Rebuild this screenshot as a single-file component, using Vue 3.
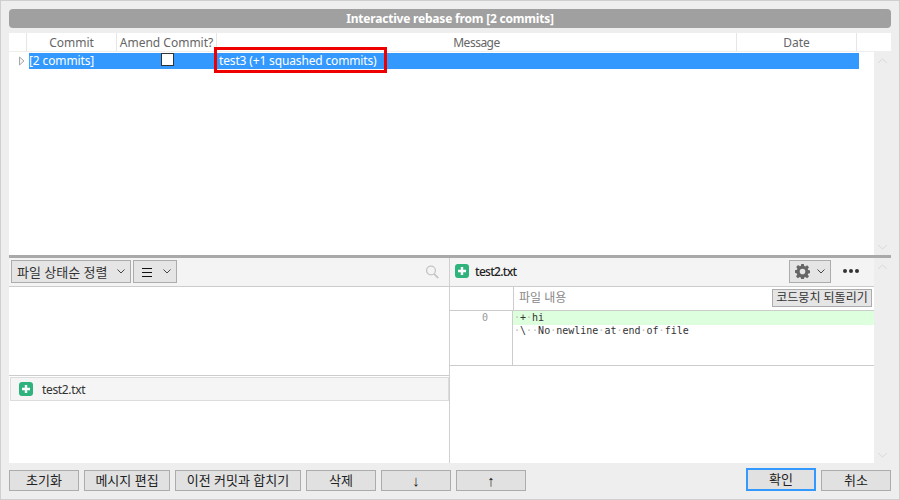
<script setup>
const columns = [
  { label: 'Commit', cls: 'c-commit' },
  { label: 'Amend Commit?', cls: 'c-amend' },
  { label: 'Message', cls: 'c-message' },
  { label: 'Date', cls: 'c-date' }
]
const leftButtons = [
  { label: '초기화', cls: 'w70' },
  { label: '메시지 편집', cls: 'w86' },
  { label: '이전 커밋과 합치기', cls: 'w126' },
  { label: '삭제', cls: 'w70' },
  { label: '↓', cls: 'w70 arrow' },
  { label: '↑', cls: 'w70 arrow' }
]
</script>

<template>
  <div class="window">
    <div class="title">Interactive rebase from [2 commits]</div>

    <div class="top">
      <div class="header">
        <div class="h-corner"></div>
        <div v-for="c in columns" :key="c.label" class="h-cell" :class="c.cls">{{ c.label }}</div>
        <div class="h-rest"></div>
      </div>
      <div class="top-body">
        <div class="table">
          <div class="row">
            <svg class="tri" width="8" height="10" viewBox="0 0 8 10">
              <path d="M1.5 1 L6 5 L1.5 9 Z" fill="#f4f4f4" stroke="#a8a8a8" />
            </svg>
            <div class="row-sel">
              <span class="cell-commit">[2 commits]</span>
              <span class="cell-amend"><span class="check"></span></span>
              <span class="cell-msg">test3 (+1 squashed commits)</span>
            </div>
          </div>
          <div class="redbox"></div>
        </div>
        <div class="scroll">
          <svg width="11" height="6" viewBox="0 0 11 6"><path d="M1 5 L5.5 1 L10 5" fill="none" stroke="#dadada" /></svg>
          <svg width="11" height="6" viewBox="0 0 11 6"><path d="M1 1 L5.5 5 L10 1" fill="none" stroke="#dadada" /></svg>
        </div>
      </div>
    </div>

    <div class="divider"></div>

    <div class="bottom">
      <div class="left">
        <div class="toolbar">
          <div class="combo sort">
            <span>파일 상태순 정렬</span>
            <svg width="8" height="5" viewBox="0 0 8 5"><path d="M0.5 0.5 L4 4 L7.5 0.5" fill="none" stroke="#444" /></svg>
          </div>
          <div class="combo view">
            <svg width="10" height="10" viewBox="0 0 10 10"><path d="M0 1.5H10M0 5.5H10M0 9.5H10" stroke="#111" /></svg>
            <svg width="8" height="5" viewBox="0 0 8 5"><path d="M0.5 0.5 L4 4 L7.5 0.5" fill="none" stroke="#444" /></svg>
          </div>
          <svg class="search" width="13" height="14" viewBox="0 0 13 14">
            <circle cx="5" cy="5.5" r="4.4" fill="none" stroke="#c4c4c4" stroke-width="1.3" />
            <path d="M8.2 9 L12.2 13.2" stroke="#c4c4c4" stroke-width="1.8" />
          </svg>
        </div>
        <div class="list-empty"></div>
        <div class="list-lower">
          <div class="file-row">
            <span class="plus"><svg width="14" height="14" viewBox="0 0 14 14"><path d="M7 3V11M3 7H11" stroke="#fff" stroke-width="2.4" /></svg></span>
            <span class="file-name">test2.txt</span>
          </div>
        </div>
      </div>

      <div class="right">
        <div class="diff-bar">
          <span class="plus"><svg width="14" height="14" viewBox="0 0 14 14"><path d="M7 3V11M3 7H11" stroke="#fff" stroke-width="2.4" /></svg></span>
          <span class="diff-name">test2.txt</span>
          <div class="gear-btn">
            <svg width="15" height="15" viewBox="0 0 16 16">
              <path fill="#666" fill-rule="evenodd" d="M6.6 0h2.8l.4 2.2 1.2.5 1.9-1.3 2 2-1.3 1.9.5 1.2 2.2.4v2.8l-2.2.4-.5 1.2 1.3 1.9-2 2-1.9-1.3-1.2.5-.4 2.2H6.6l-.4-2.2-1.2-.5-1.9 1.3-2-2 1.3-1.9-.5-1.2L-.1 9.4V6.6l2.2-.4.5-1.2L1.3 3.1l2-2 1.9 1.3 1.2-.5zM8 5a3 3 0 1 0 0 6 3 3 0 0 0 0-6z" />
            </svg>
            <svg width="8" height="5" viewBox="0 0 8 5"><path d="M0.5 0.5 L4 4 L7.5 0.5" fill="none" stroke="#444" /></svg>
          </div>
          <div class="dots"><i></i><i></i><i></i></div>
        </div>
        <div class="diff-head">
          <div class="gutter"></div>
          <div class="diff-head-main">
            <span class="file-content">파일 내용</span>
            <span class="revert">코드뭉치 되돌리기</span>
          </div>
        </div>
        <div class="diff-body">
          <div class="gutter line-no">0</div>
          <div class="code">
            <div class="line added"><b>·</b>+<b>·</b>hi</div>
            <div class="line"><b>·</b>\<b>··</b>No<b>·</b>newline<b>·</b>at<b>·</b>end<b>·</b>of<b>·</b>file</div>
          </div>
        </div>
        <div class="diff-empty"></div>
      </div>

      <div class="scroll">
        <svg width="11" height="6" viewBox="0 0 11 6"><path d="M1 5 L5.5 1 L10 5" fill="none" stroke="#dadada" /></svg>
        <svg width="11" height="6" viewBox="0 0 11 6"><path d="M1 1 L5.5 5 L10 1" fill="none" stroke="#dadada" /></svg>
      </div>
    </div>

    <div class="actions">
      <button v-for="b in leftButtons" :key="b.label" class="btn" :class="b.cls">{{ b.label }}</button>
      <div class="spacer"></div>
      <button class="btn w70 primary">확인</button>
      <button class="btn w70">취소</button>
    </div>
  </div>
</template>

<style>
html, body { margin: 0; padding: 0; }
</style>

<style scoped>
.window {
  width: 900px;
  height: 500px;
  box-sizing: border-box;
  border: 1px solid #cfcfcf;
  background: #eeeeee;
  padding: 8px;
  display: flex;
  flex-direction: column;
  font-family: "Noto Sans", "Noto Sans CJK KR", sans-serif;
  font-size: 12px;
  color: #333;
  overflow: hidden;
}
.title {
  height: 19px;
  line-height: 19px;
  flex: none;
  background: #a0a0a0;
  border-radius: 4px;
  color: #fff;
  font-weight: 700;
  text-align: center;
  margin-bottom: 5px;
  letter-spacing: -0.2px;
}
.top {
  height: 222px;
  flex: none;
  display: flex;
  flex-direction: column;
}
.header {
  height: 18px;
  flex: none;
  display: flex;
  background: #fff;
  border-bottom: 1px solid #eeeeee;
  color: #666;
  line-height: 19px;
}
.h-corner { width: 17px; border-right: 1px solid #e6e6e6; }
.h-cell {
  box-sizing: border-box;
  text-align: center;
  border-right: 1px solid #e6e6e6;
  white-space: nowrap;
  overflow: hidden;
}
.c-commit { width: 90px; }
.c-amend { width: 100px; }
.c-message { width: 520px; letter-spacing: -0.5px; }
.c-date { width: 120px; }
.h-rest { flex: 1; }
.top-body { flex: 1; display: flex; min-height: 0; }
.table {
  flex: 1;
  background: #fff;
  position: relative;
}
.row {
  display: flex;
  align-items: center;
  height: 16px;
  margin-top: 1px;
  padding-left: 9px;
}
.tri { margin-right: 3px; flex: none; }
.row-sel {
  width: 830px;
  height: 16px;
  background: #3399ff;
  color: #fff;
  display: flex;
  align-items: center;
  line-height: 16px;
  white-space: nowrap;
}
.cell-commit { width: 87px; box-sizing: border-box; letter-spacing: -0.12px; }
.cell-amend { width: 103px; display: flex; justify-content: center; align-self: flex-start; padding-right: 1px; box-sizing: border-box; }
.check {
  width: 11px;
  height: 11px;
  background: #fff;
  border: 1px solid #333;
  display: block;
}
.cell-msg { letter-spacing: -0.15px; }
.redbox {
  position: absolute;
  left: 205px;
  top: -5px;
  width: 173px;
  height: 26px;
  box-sizing: border-box;
  border: 3px solid #ee0000;
}
.scroll {
  width: 17px;
  flex: none;
  background: #eeeeee;
  display: flex;
  flex-direction: column;
  justify-content: space-between;
  align-items: center;
  padding: 6px 0 5px;
  box-sizing: border-box;
}
.divider { height: 3px; flex: none; background: #a9a9a9; }
.bottom {
  height: 205px;
  flex: none;
  display: flex;
}
.left {
  width: 441px;
  flex: none;
  display: flex;
  flex-direction: column;
  background: #fff;
  border-right: 1px solid #d0d0d0;
  box-sizing: border-box;
}
.toolbar {
  height: 29px;
  flex: none;
  box-sizing: border-box;
  background: #f4f4f4;
  border-bottom: 1px solid #cccccc;
  display: flex;
  align-items: flex-start;
  padding: 2px 8px 0 2px;
  gap: 2px;
}
.combo {
  height: 23px;
  box-sizing: border-box;
  border: 1px solid #acacac;
  background: #e5e5e5;
  display: flex;
  align-items: center;
  justify-content: space-between;
  color: #333;
  font-size: 13px;
}
.sort { width: 120px; padding: 0 5px 0 5px; white-space: nowrap; }
.view { width: 44px; padding: 0 5px 0 8px; }
.search { margin-left: auto; margin-top: 5px; margin-right: 2px; }
.list-empty { height: 88px; flex: none; border-bottom: 1px solid #cccccc; }
.list-lower { flex: 1; padding: 1px 0 0 1px; }
.file-row {
  height: 24px;
  box-sizing: border-box;
  border: 1px solid #dcdcdc;
  background: #f5f5f5;
  display: flex;
  align-items: center;
  padding-left: 8px;
  gap: 9px;
  color: #333;
  letter-spacing: -0.35px;
}
.plus {
  width: 14px;
  height: 14px;
  border-radius: 3px;
  background: #2fb37c;
  display: block;
  flex: none;
}
.plus svg { display: block; }
.right {
  flex: 1;
  min-width: 0;
  display: flex;
  flex-direction: column;
  background: #fff;
}
.diff-bar {
  height: 29px;
  flex: none;
  box-sizing: border-box;
  background: #f4f4f4;
  border-bottom: 1px solid #cccccc;
  display: flex;
  align-items: center;
  padding: 0 14px 2px 5px;
}
.diff-name { margin-left: 6px; font-weight: 500; color: #222; flex: 1; letter-spacing: -0.7px; }
.gear-btn {
  width: 42px;
  height: 23px;
  box-sizing: border-box;
  border: 1px solid #acacac;
  background: #e5e5e5;
  display: flex;
  align-items: center;
  justify-content: space-between;
  padding: 0 5px;
}
.dots { display: flex; gap: 2px; margin-left: 12px; margin-right: 1px; }
.dots i { width: 4px; height: 4px; border-radius: 50%; background: #333; display: block; }
.diff-head {
  height: 24px;
  flex: none;
  display: flex;
  border-bottom: 1px solid #cccccc;
  box-sizing: border-box;
}
.gutter {
  width: 63px;
  flex: none;
  border-right: 1px solid #cccccc;
}
.diff-head-main {
  flex: 1;
  display: flex;
  align-items: flex-start;
  justify-content: space-between;
  padding-left: 5px;
  padding-right: 2px;
}
.file-content { color: #888; line-height: 22px; margin-top: 0; }
.revert {
  margin-top: 2px;
  width: 100px;
  height: 18px;
  line-height: 16px;
  box-sizing: border-box;
  border: 1px solid #acacac;
  background: #e5e5e5;
  text-align: center;
  color: #333;
  white-space: nowrap;
}
.diff-body {
  height: 55px;
  flex: none;
  display: flex;
  box-sizing: border-box;
  border-bottom: 1px solid #cccccc;
  font-family: "DejaVu Sans Mono", monospace;
  font-size: 10px;
  line-height: 13px;
}
.line-no {
  color: #999;
  text-align: right;
  padding-right: 24px;
  box-sizing: border-box;
}
.code { flex: 1; color: #333; }
.line { height: 12px; line-height: 12px; padding-left: 1px; white-space: pre; }
.line b { font-weight: 400; color: #bbbbbb; }
.added { background: #ddffdd; height: 14px; line-height: 13px; }
.diff-empty { flex: 1; }
.actions {
  flex: 1;
  display: flex;
  align-items: flex-end;
  gap: 5px;
}
.btn {
  height: 21px;
  padding: 0;
  border: 1px solid #acacac;
  background: #e1e1e1;
  font: inherit;
  font-size: 13px;
  color: #222;
  line-height: 19px;
}
.arrow { font-family: "Liberation Sans", sans-serif; font-size: 15px; font-weight: 700; }
.w70 { width: 70px; }
.w86 { width: 86px; }
.w126 { width: 126px; }
.spacer { flex: 1; }
.primary { height: 23px; border: 2px solid #3399ff; }
</style>
